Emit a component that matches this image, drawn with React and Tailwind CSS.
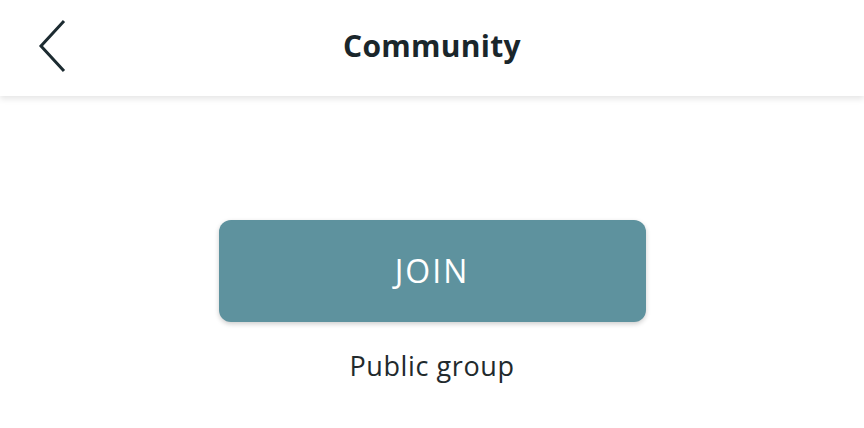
import React from 'react';

const BackIcon = () => (
  <svg width="30" height="54" viewBox="0 0 30 54" fill="none">
    <path d="M26 2 L3 27 L26 52" stroke="#1c2b31" strokeWidth="3" strokeLinecap="butt" strokeLinejoin="miter" />
  </svg>
);

const App = () => {
  return (
    <div className="w-[864px] h-[428px] bg-white flex flex-col overflow-hidden" style={{ fontFamily: '"Open Sans", Lato, sans-serif' }}>
      {/* Top bar */}
      <header className="relative h-[96px] bg-white flex items-center justify-center shadow-[0_3px_6px_rgba(0,0,0,0.1)] z-10">
        <button className="absolute left-[38px] top-[19px]">
          <BackIcon />
        </button>
        <h1 className="text-[30px] leading-[40px] font-bold text-[#1a262b] tracking-[0.3px] -mt-[4px]">Community</h1>
      </header>

      {/* Join area */}
      <main className="flex-1 flex flex-col items-center pt-[124px]">
        <button className="w-[427px] h-[102px] rounded-[12px] bg-[#5e929e] text-white text-[32px] tracking-[2px] shadow-[0_2px_5px_rgba(0,0,0,0.2)]">
          JOIN
        </button>
        <p className="mt-[26px] text-[27px] leading-[36px] text-[#222a2d] tracking-[0.6px]">Public group</p>
      </main>
    </div>
  );
};

export default App;
